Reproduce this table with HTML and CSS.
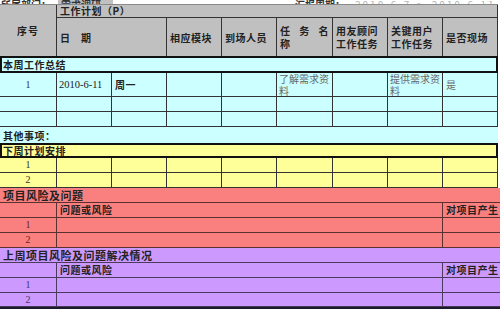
FILE: index.html
```html
<!DOCTYPE html>
<html lang="zh-CN">
<head>
<meta charset="utf-8">
<title>工作计划</title>
<link rel="stylesheet" href="styles.css">
</head>
<body>
<div class="sheet">
  <div class="strip">
    <div class="strip-in">
      <span class="s-lbl">所属部门：</span>
      <span class="s-box">需求调研</span>
      <span class="s-lbl2">汇报周期：</span>
      <span class="s-val">2010-6-7 ～ 2010-6-11</span>
    </div>
  </div>

  <div class="hdr">
    <div class="h-no">序号</div>
    <div class="h-plan">工作计划（P）</div>
    <div class="h-date">日　期</div>
    <div class="h-c">相应模块</div>
    <div class="h-c">到场人员</div>
    <div class="h-c h-task"><span class="jst"><span>任</span><span>务</span><span>名</span></span><span>称</span></div>
    <div class="h-c h-two"><span>用友顾问</span><span>工作任务</span></div>
    <div class="h-c h-two"><span>关键用户</span><span>工作任务</span></div>
    <div class="h-c h-last">是否现场</div>
  </div>

  <section class="sec cyan">
    <div class="title boxed">本周工作总结</div>
    <div class="row tall">
      <div class="c num">1</div>
      <div class="c date">2010-6-11</div>
      <div class="c bold">周一</div>
      <div class="c"></div>
      <div class="c"></div>
      <div class="c thin top">了解需求资料</div>
      <div class="c"></div>
      <div class="c thin top">提供需求资料</div>
      <div class="c thin">是</div>
    </div>
    <div class="row">
      <div class="c"></div><div class="c"></div><div class="c"></div><div class="c"></div><div class="c"></div><div class="c"></div><div class="c"></div><div class="c"></div><div class="c"></div>
    </div>
    <div class="row">
      <div class="c"></div><div class="c"></div><div class="c"></div><div class="c"></div><div class="c"></div><div class="c"></div><div class="c"></div><div class="c"></div><div class="c"></div>
    </div>
    <div class="note">其他事项：</div>
  </section>

  <section class="sec yellow">
    <div class="title boxed">下周计划安排</div>
    <div class="row">
      <div class="c num">1</div><div class="c"></div><div class="c"></div><div class="c"></div><div class="c"></div><div class="c"></div><div class="c"></div><div class="c"></div><div class="c"></div>
    </div>
    <div class="row">
      <div class="c num">2</div><div class="c"></div><div class="c"></div><div class="c"></div><div class="c"></div><div class="c"></div><div class="c"></div><div class="c"></div><div class="c"></div>
    </div>
  </section>

  <section class="sec red">
    <div class="title big">项目风险及问题</div>
    <div class="rrow">
      <div class="c"></div>
      <div class="c lbl">问题或风险</div>
      <div class="c lbl last">对项目产生</div>
    </div>
    <div class="rrow">
      <div class="c num">1</div><div class="c"></div><div class="c last"></div>
    </div>
    <div class="rrow">
      <div class="c num">2</div><div class="c"></div><div class="c last"></div>
    </div>
  </section>

  <section class="sec purple">
    <div class="title big">上周项目风险及问题解决情况</div>
    <div class="rrow">
      <div class="c"></div>
      <div class="c lbl">问题或风险</div>
      <div class="c lbl last">对项目产生</div>
    </div>
    <div class="rrow">
      <div class="c num">1</div><div class="c"></div><div class="c last"></div>
    </div>
    <div class="rrow short">
      <div class="c num">2</div><div class="c"></div><div class="c last"></div>
    </div>
  </section>
  <div class="endline"></div>
</div>
</body>
</html>
```

FILE: styles.css
```css
* { box-sizing: border-box; margin: 0; padding: 0; }

body {
  margin: 0;
  background: #fff;
  width: 500px;
  height: 309px;
  overflow: hidden;
  font-family: "Noto Sans CJK SC", "Liberation Sans", sans-serif;
  font-size: 10px;
  color: #222;
}

.sheet { width: 500px; }

/* cut-off strip at the very top */
.strip { height: 4px; overflow: hidden; }
.strip-in {
  display: flex;
  align-items: flex-start;
  height: 12px;
  margin-top: 0;
  font-weight: bold;
  font-size: 10px;
  line-height: 10px;
}
.s-lbl { width: 58px; padding-left: 1px; color: #333; }
.s-box { width: 55px; height: 4px; background: #c0c0c0; padding-left: 3px; color: #333; }
.s-lbl2 { margin-left: 182px; width: 60px; color: #333; }
.s-val { color: #b5b5b5; font-weight: normal; letter-spacing: 2px; }

/* header */
.hdr {
  display: grid;
  grid-template-columns: 57px 55px 55px 55px 55px 56px 55px 55px 55px;
  grid-template-rows: 13px 38px;
  width: 498px;
  background: #c0c0c0;
  border-top: 1px solid #8a8a8a;
  font-weight: bold;
  letter-spacing: 0.5px;
}
.hdr > div {
  border-right: 1px solid #333;
  display: flex;
  align-items: center;
  padding-left: 3px;
  line-height: 13px;
}
.h-no { grid-row: 1 / 3; justify-content: center; padding-left: 0 !important; letter-spacing: 1px; }
.h-plan { grid-column: 2 / 10; border-bottom: 1px solid #333; line-height: 12px !important; }
.h-date { grid-column: 2 / 4; }
.h-task { flex-direction: column; align-items: stretch !important; justify-content: center; padding-right: 3px; }
.jst { display: flex; justify-content: space-between; }
.h-two { flex-direction: column; align-items: flex-start !important; justify-content: center; }

/* sections */
.sec { width: 498px; }
.cyan { background: #ccffff; }
.yellow { background: #ffff99; }
.red { background: #fa8080; width: 500px; }
.purple { background: #cc99ff; width: 500px; }

.title {
  height: 15px;
  display: flex;
  align-items: center;
  padding-left: 3px;
  font-weight: bold;
  letter-spacing: 0.5px;
  line-height: 12px;
}
.title.boxed { border: 2px solid #111; padding-left: 1px; }
.cyan .title.boxed { height: 17px; }
.title.big { font-size: 11px; border-bottom: 1px solid #5a3030; }
.purple .title.big { border-bottom-color: #4a3a60; }

.row {
  display: grid;
  grid-template-columns: 57px 55px 55px 55px 55px 56px 55px 55px 55px;
  height: 15px;
}
.row.tall { height: 24px; }

.c {
  border-right: 1px solid #333;
  border-bottom: 1px solid #333;
  display: flex;
  align-items: center;
  padding-left: 3px;
  line-height: 12px;
  overflow: hidden;
}
.num {
  justify-content: center;
  padding-left: 0;
  font-family: "Liberation Serif", serif;
  font-size: 10px;
  color: #333;
}
.date { font-family: "Liberation Serif", serif; font-size: 10.5px; padding-left: 2px; color: #222; }
.bold { font-weight: bold; letter-spacing: 0.5px; }
.thin { color: #666; font-size: 10px; }
.top { align-items: flex-start; padding-top: 0; padding-left: 2px; line-height: 12px; word-break: break-all; }

.note {
  height: 16px;
  display: flex;
  align-items: center;
  padding-left: 3px;
  font-weight: bold;
  letter-spacing: 0.5px;
}

.rrow {
  display: grid;
  grid-template-columns: 57px 386px 57px;
  height: 15px;
}
.rrow.short { height: 14px; }
.red .c { border-color: #5a3030; }
.purple .c { border-color: #4a3a60; }
.c.last { border-right: none; }
.lbl { font-weight: bold; letter-spacing: 0.5px; white-space: nowrap; }
.red .num { color: #6a2020; }
.purple .num { color: #4a3570; }

.endline { height: 2px; width: 500px; background: #1a1a2a; }
```
